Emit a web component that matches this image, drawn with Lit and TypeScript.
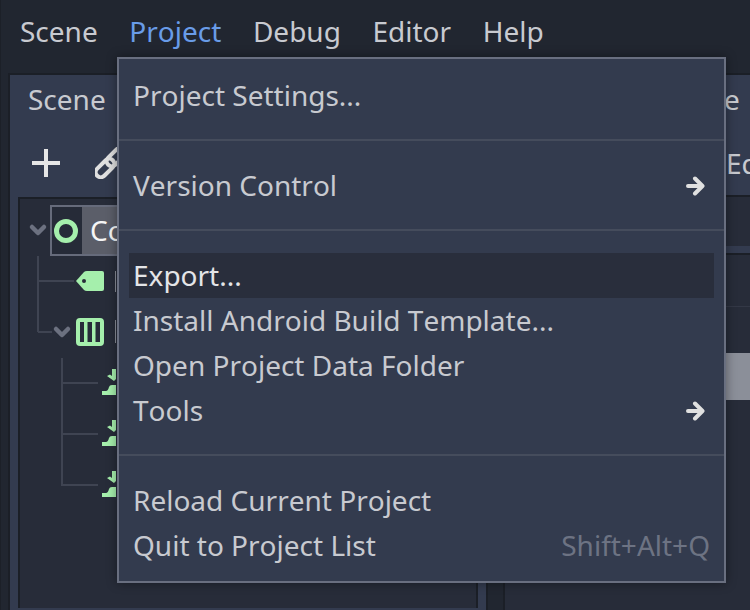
import { LitElement, html, css, svg } from 'lit';
import { customElement } from 'lit/decorators.js';

const GREEN = '#a5efac';
const GUIDE = '#3f4452';
const CHEVRON = '#6c7180';
const CLIPPED_LABEL = '#8b8f99';

type MenuEntry = { label?: string; shortcut?: string; submenu?: boolean; active?: boolean };

const MENU: MenuEntry[] = [
  { label: 'Project Settings...' },
  {},
  { label: 'Version Control', submenu: true },
  {},
  { label: 'Export...', active: true },
  { label: 'Install Android Build Template...' },
  { label: 'Open Project Data Folder' },
  { label: 'Tools', submenu: true },
  {},
  { label: 'Reload Current Project' },
  { label: 'Quit to Project List', shortcut: 'Shift+Alt+Q' },
];

const guide = (x1: number, y1: number, x2: number, y2: number) =>
  svg`<line x1=${x1} y1=${y1} x2=${x2} y2=${y2} stroke=${GUIDE} stroke-width="2" />`;

const chevron = (cx: number, cy: number) =>
  svg`<path d="M${cx - 6} ${cy - 3}L${cx} ${cy + 3}L${cx + 6} ${cy - 3}" fill="none" stroke=${CHEVRON} stroke-width="4.5" stroke-linecap="round" stroke-linejoin="round" />`;

const tagIcon = svg`
  <path d="M76 25L84 16Q85 15 87 15H102Q104 15 104 17V33Q104 35 102 35H87Q85 35 84 34Z" fill=${GREEN} />
  <circle cx="84" cy="25" r="2" fill="#272c39" />`;

const tableIcon = svg`
  <path fill-rule="evenodd" fill=${GREEN} d="M80 11H100Q104 11 104 15V35Q104 39 100 39H80Q76 39 76 35V15Q76 11 80 11ZM80 15V35H84V15ZM87.500 15V35H92V15ZM95.500 15V35H100V15Z" />`;

const importIcon = svg`
  <path fill=${GREEN} d="M112 11H116V18H119L114 23L107 18L110 16.500L112 18Z" />
  <path fill=${GREEN} d="M102 37V33H106Q108 33 109 29Q109.500 27 112 27H125V37Z" />`;

const treeIcon = (content: unknown) =>
  html`<svg class="tree-icon" width="96" height="51" viewBox="20 0 96 51">${content}</svg>`;

@customElement('app-root')
export class AppRoot extends LitElement {
  static styles = css`
    :host {
      display: block;
      font-family: 'Noto Sans', sans-serif;
      font-size: 28px;
      font-kerning: none;
      color: #c8cad0;
    }

    .app {
      position: relative;
      display: flex;
      flex-direction: column;
      width: 750px;
      height: 610px;
      overflow: hidden;
      box-sizing: border-box;
      background: #212630;
      border-left: 1px solid #1c2028;
    }

    .menubar {
      flex: none;
      display: flex;
      gap: 31.6px;
      align-items: center;
      box-sizing: border-box;
      height: 73px;
      padding: 0 0 11px 19px;
    }

    .menubar .open {
      color: #699ce8;
    }

    .docks {
      flex: 1;
      min-height: 0;
      display: flex;
      gap: 15px;
      padding-left: 7px;
    }

    .dock {
      flex: none;
      box-sizing: border-box;
      background: #333b4f;
      border: 2px solid #1b1f27;
      border-bottom: 0;
    }

    .dock.left {
      width: 480px;
      padding: 0 8px;
    }

    .dock.right {
      width: 300px;
      padding-left: 11px;
      overflow: hidden;
    }

    .tab {
      display: flex;
      align-items: center;
      box-sizing: border-box;
      height: 50px;
      padding: 0 0 2px 10px;
    }

    .dock.right .tab {
      padding-left: 208px;
    }

    .toolbar {
      display: flex;
      align-items: center;
      gap: 35px;
      box-sizing: border-box;
      height: 72px;
      padding: 4px 0 0 14px;
      white-space: nowrap;
    }

    .dock.right .toolbar {
      height: 70px;
      padding: 6px 0 0 210px;
    }

    .tree {
      height: 411px;
      box-sizing: border-box;
      padding-top: 6px;
      background: #272c39;
      border: 2px solid #1b1f27;
      border-bottom: 0;
      overflow: hidden;
    }

    .row {
      display: flex;
      align-items: center;
      height: 51px;
      white-space: nowrap;
    }

    .tree-icon {
      flex: none;
      display: block;
    }

    .selected {
      flex: 1;
      display: flex;
      align-self: stretch;
      box-sizing: border-box;
      border: 2px solid #666b7b;
    }

    .selected .cell {
      flex: none;
      display: flex;
      align-items: center;
      box-sizing: border-box;
      width: 30px;
      padding-left: 1px;
      background: #262b38;
    }

    .selected .name {
      flex: 1;
      display: flex;
      align-items: center;
      padding: 0 0 2px 8px;
      background: #5b5e69;
      color: #f5f5f5;
    }

    .panel-top {
      margin-left: -11px;
      height: 49px;
      background: #272c39;
      border-top: 2px solid #1b1f27;
    }

    .panel-strip {
      margin-left: -11px;
      height: 7px;
    }

    .panel-bottom {
      margin-left: -11px;
      height: 355px;
      background: #272c39;
      border-top: 2px solid #1b1f27;
    }

    .prop-row {
      height: 51px;
      border-bottom: 1px solid #333846;
    }

    .prop-slider {
      height: 47px;
      margin-top: 46px;
      background: #8b8f99;
    }

    .menu {
      position: absolute;
      left: 116px;
      top: 57px;
      width: 609px;
      height: 526px;
      box-sizing: border-box;
      padding: 14px 10px 13px;
      background: #333b4e;
      border: 2px solid #696f80;
      box-shadow: 0 0 10px rgba(0, 0, 0, 0.4);
    }

    .item {
      display: flex;
      align-items: center;
      justify-content: space-between;
      box-sizing: border-box;
      height: 45px;
      padding: 0 4px 2px 4px;
      white-space: nowrap;
    }

    .item.active {
      background: #292e3c;
      color: #e4e5e8;
    }

    .item .arrow {
      display: block;
      margin: 2px 5px 0 0;
    }

    .item .shortcut {
      color: #6d7383;
    }

    .separator {
      height: 45px;
      margin: 0 -10px;
      padding-top: 21px;
      box-sizing: border-box;
    }

    .separator div {
      height: 2px;
      background: #454c5c;
    }
  `;

  private renderMenuEntry(entry: MenuEntry) {
    if (!entry.label) {
      return html`<div class="separator"><div></div></div>`;
    }
    return html`
      <div class="item ${entry.active ? 'active' : ''}">
        <span>${entry.label}</span>
        ${entry.shortcut ? html`<span class="shortcut">${entry.shortcut}</span>` : ''}
        ${entry.submenu
          ? html`<svg class="arrow" width="20" height="22" viewBox="0 0 20 22">
              <path d="M3 11H17M10 3.500L17.500 11L10 18.500" fill="none" stroke="#e0e0e0" stroke-width="4" stroke-linecap="round" stroke-linejoin="round" />
            </svg>`
          : ''}
      </div>
    `;
  }

  private renderTree() {
    return html`
      <div class="row">
        <svg class="tree-icon" width="30" height="47" viewBox="20 0 30 47">${chevron(38, 23)}</svg>
        <div class="selected">
          <div class="cell">
            <svg width="26" height="26" viewBox="0 0 26 26">
              <circle cx="13" cy="13" r="9.500" fill="none" stroke=${GREEN} stroke-width="5" />
            </svg>
          </div>
          <div class="name">Co</div>
        </div>
      </div>
      <div class="row">
        ${treeIcon(svg`${guide(38, 0, 38, 51)}${guide(38, 25, 74, 25)}${tagIcon}
          <rect x="115" y="15" width="1" height="21" fill=${CLIPPED_LABEL} />`)}
      </div>
      <div class="row">
        ${treeIcon(svg`${guide(38, 0, 38, 25)}${guide(38, 25, 52, 25)}${chevron(62, 25)}${tableIcon}
          <rect x="115" y="13" width="1" height="23" fill=${CLIPPED_LABEL} />`)}
      </div>
      ${[0, 1, 2].map(
        (i) => html`
          <div class="row">
            ${treeIcon(svg`${guide(62, 0, 62, i === 2 ? 26 : 51)}${guide(62, 25, 98, 25)}${importIcon}`)}
          </div>
        `,
      )}
    `;
  }

  render() {
    return html`
      <div class="app">
        <div class="menubar">
          <span>Scene</span>
          <span class="open">Project</span>
          <span>Debug</span>
          <span>Editor</span>
          <span>Help</span>
        </div>
        <div class="docks">
          <div class="dock left">
            <div class="tab">Scene</div>
            <div class="toolbar">
              <svg width="28" height="28" viewBox="0 0 28 28">
                <path d="M14 0V28M0 14H28" stroke="#e6e6e6" stroke-width="4" />
              </svg>
              <svg width="32" height="32" viewBox="0 0 32 32" fill="none" stroke="#e0e0e0" stroke-width="4">
                <rect x="10" y="5" width="22" height="10" rx="5" transform="rotate(-45 21 10)" />
                <rect x="-1" y="16" width="22" height="10" rx="5" transform="rotate(-45 10 21)" />
              </svg>
            </div>
            <div class="tree">${this.renderTree()}</div>
          </div>
          <div class="dock right">
            <div class="tab">e</div>
            <div class="toolbar">Ed</div>
            <div class="panel-top"></div>
            <div class="panel-strip"></div>
            <div class="panel-bottom">
              <div class="prop-row"></div>
              <div class="prop-slider"></div>
            </div>
          </div>
        </div>
        <div class="menu">${MENU.map((entry) => this.renderMenuEntry(entry))}</div>
      </div>
    `;
  }
}

declare global {
  interface HTMLElementTagNameMap {
    'app-root': AppRoot;
  }
}
